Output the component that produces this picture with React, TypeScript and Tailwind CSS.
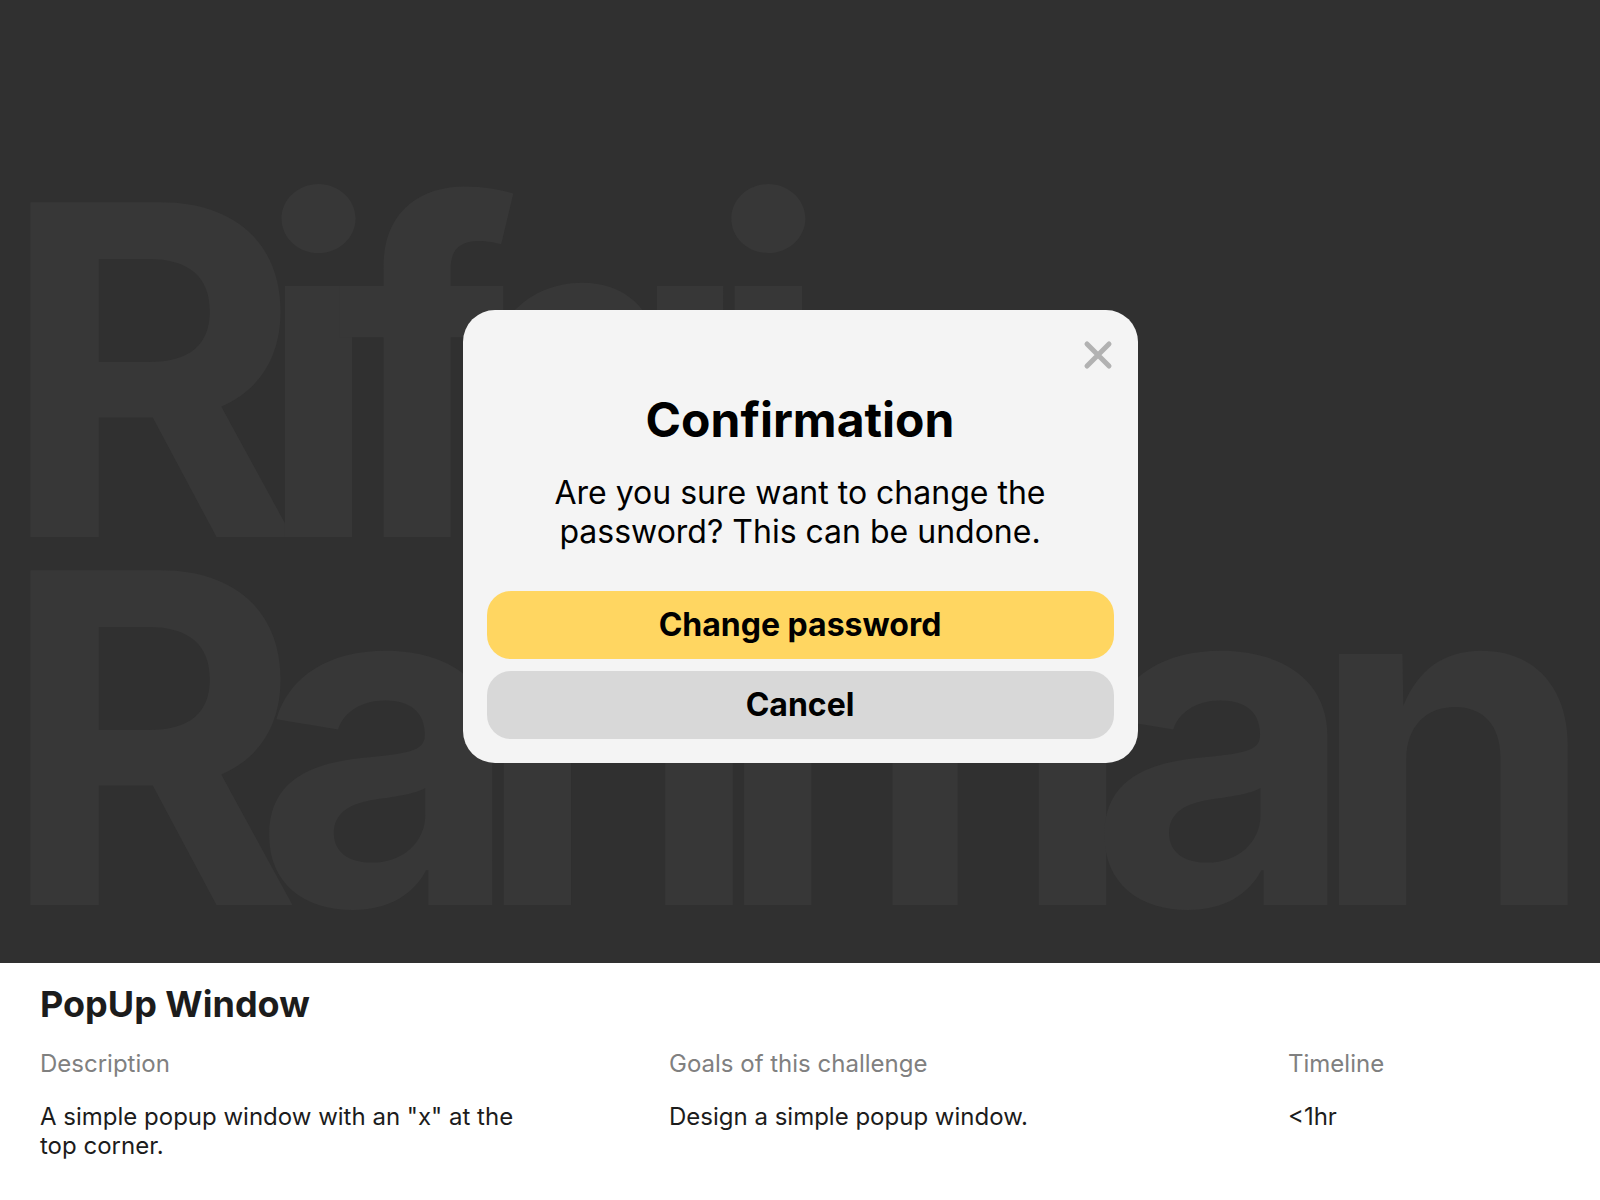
import React from "react";

const details = [
  { label: "Description", text: 'A simple popup window with an "x" at the top corner.' },
  { label: "Goals of this challenge", text: "Design a simple popup window." },
  { label: "Timeline", text: "<1hr" },
];

function Watermark() {
  return (
    <div
      aria-hidden="true"
      className="col-start-1 row-start-1 min-w-0 select-none pt-[186px] text-[460px] font-bold leading-[368px] tracking-[-0.1em] text-[#373737]"
    >
      <div>Rifqi</div>
      <div>Rahman</div>
    </div>
  );
}

function ConfirmationDialog() {
  return (
    <div
      role="dialog"
      aria-labelledby="dialog-title"
      aria-describedby="dialog-text"
      className="z-10 col-start-1 row-start-1 mx-6 mt-[310px] mb-[200px] flex w-full max-w-[675px] flex-col justify-self-center rounded-[32px] bg-[#f4f4f4] p-6 text-black"
    >
      <button type="button" aria-label="Close" className="-mr-1 size-10 self-end text-[#b2b2b2]">
        <svg viewBox="0 0 40 40" className="size-10" fill="none" stroke="currentColor" strokeWidth="5" strokeLinecap="round">
          <path d="M9 10 L31 32 M31 10 L9 32" />
        </svg>
      </button>
      <h1 id="dialog-title" className="mt-4 text-center text-[48px] font-bold leading-[60px]">
        Confirmation
      </h1>
      <p id="dialog-text" className="mx-auto mt-[23px] max-w-[520px] text-center text-[32px] leading-[39px]">
        Are you sure want to change the password? This can be undone.
      </p>
      <div className="mt-10 flex flex-col gap-3">
        <button type="button" className="h-[68px] rounded-3xl bg-[#ffd661] text-[32px] font-bold">
          Change password
        </button>
        <button type="button" className="h-[68px] rounded-3xl bg-[#d8d8d8] text-[32px] font-bold">
          Cancel
        </button>
      </div>
    </div>
  );
}

export default function App() {
  return (
    <div className="flex min-h-screen flex-col bg-white font-['Inter',sans-serif]">
      <main className="grid grid-cols-1 overflow-x-clip bg-[#303030]">
        <Watermark />
        <ConfirmationDialog />
      </main>
      <footer className="px-10 pt-[19px] pb-8 text-2xl leading-[29px] text-[#1c1c1c]">
        <h2 className="text-[36px] font-bold leading-[44px]">PopUp Window</h2>
        <dl className="mt-[23px] grid grid-cols-[629fr_619fr_272fr]">
          {details.map((item) => (
            <div key={item.label}>
              <dt className="text-[#808080]">{item.label}</dt>
              <dd className="mt-6 max-w-[500px]">{item.text}</dd>
            </div>
          ))}
        </dl>
      </footer>
    </div>
  );
}
